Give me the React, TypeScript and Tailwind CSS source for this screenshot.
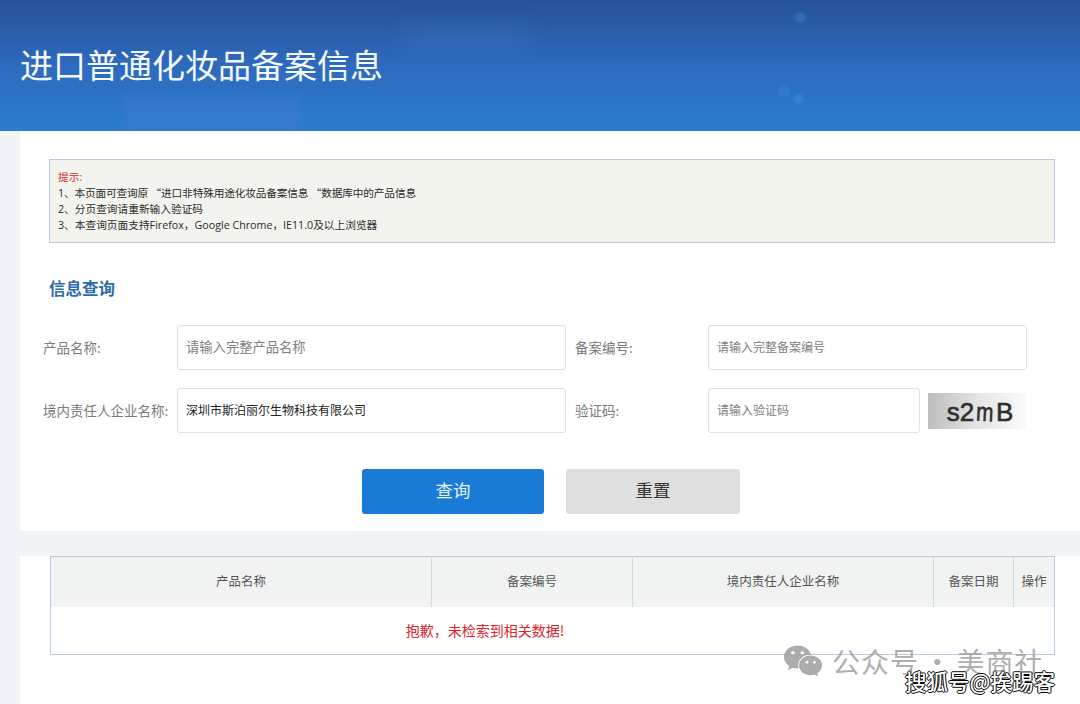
import { FaWeixin } from "react-icons/fa";

const labelClass = "text-[13.5px] text-[#7a7a7a]";
const inputClass = "h-[45px] rounded-[3px] border border-[#e0e0e0] bg-white px-2 pb-[2px] text-[12px] text-[#222] outline-none placeholder:text-[#808080]";
const quoteClass = "font-['Noto_Sans_CJK_SC',sans-serif]";

export default function App() {
    return (
        <div className="relative h-[704px] w-[1080px] overflow-hidden bg-[#f0f4f8] font-['Noto_Sans_CJK_SC',sans-serif]">
            <header className="relative flex h-[131px] items-center overflow-hidden bg-gradient-to-b from-[#27529b] via-[#2e6abd] to-[#2a7dcf] pb-[2px] pl-5">
                <div className="absolute bottom-0 left-[125px] h-[36px] w-[175px] bg-[#3f7bcf]/50 blur-[4px]" />
                <div className="absolute left-[400px] top-[25px] h-[30px] w-[130px] rounded-full bg-[#4a80c4]/20 blur-[10px]" />
                <div className="absolute left-[795px] top-[12px] size-[11px] rounded-full bg-[#3a80c8]/50 blur-[1px]" />
                <div className="absolute left-[778px] top-[85px] size-[12px] rounded-full bg-[#3a86d4]/50 blur-[1px]" />
                <div className="absolute left-[794px] top-[94px] size-[10px] rounded-full bg-[#3a8cd8]/60 blur-[1px]" />
                <h1 className="relative text-[33px] leading-none text-[#f2f8fc]">进口普通化妆品备案信息</h1>
            </header>

            <div className="flex flex-col pl-5">
                <section className="flex h-[400px] flex-col bg-white pt-7">
                    <div className="ml-[29px] mr-[25px] h-[84px] border border-[#b9cbe2] bg-[#f3f4ee] px-2 py-[9px] font-['Open_Sans','Noto_Sans_CJK_SC',sans-serif] text-[10.7px] leading-[16px] text-[#2b2b2b]">
                        <p className="text-[#d9262e]">提示:</p>
                        <p className="tracking-[-0.18px]">1、本页面可查询原 <span className={quoteClass}>“</span>进口非特殊用途化妆品备案信息 <span className={quoteClass}>“</span>数据库中的产品信息</p>
                        <p>2、分页查询请重新输入验证码</p>
                        <p>3、本查询页面支持Firefox，Google Chrome，IE11.0及以上浏览器</p>
                    </div>

                    <h2 className="ml-[29px] mt-[33px] text-[16.5px] font-bold leading-[24px] text-[#2e6ca8]">信息查询</h2>

                    <div className="mt-[25px] flex h-[45px] items-center pl-[23px]">
                        <div className={`w-[134px] ${labelClass}`}>产品名称:</div>
                        <input readOnly placeholder="请输入完整产品名称" className={`w-[389px] ${inputClass} text-[13.3px]`} />
                        <div className={`ml-[9px] w-[133px] ${labelClass}`}>备案编号:</div>
                        <input readOnly placeholder="请输入完整备案编号" className={`w-[319px] ${inputClass}`} />
                    </div>

                    <div className="mt-[18px] flex h-[45px] items-center pl-[23px]">
                        <div className={`w-[134px] whitespace-nowrap ${labelClass}`}>境内责任人企业名称:</div>
                        <input readOnly value="深圳市斯泊丽尔生物科技有限公司" className={`w-[389px] ${inputClass}`} />
                        <div className={`ml-[9px] w-[133px] ${labelClass}`}>验证码:</div>
                        <input readOnly placeholder="请输入验证码" className={`w-[212px] ${inputClass}`} />
                        <div className="ml-2 flex h-[36px] w-[98px] items-center justify-center bg-gradient-to-r from-[#bdbdbd] via-[#e4e4e4] to-[#fafafa] pl-[6px] pt-[2px] font-['Liberation_Sans',sans-serif] text-[26px] leading-none text-[#2e2e2e] [-webkit-text-stroke:0.6px_#2e2e2e]">
                            s2<span className="inline-block scale-x-[0.8] rotate-3">m</span>B
                        </div>
                    </div>

                    <div className="mt-9 flex gap-[22px] pl-[342px]">
                        <button className="h-[45px] w-[182px] rounded-[3px] bg-[#1a7bd7] pb-[2px] text-[17.5px] text-[#e6f3fc]">查询</button>
                        <button className="h-[45px] w-[174px] rounded-[3px] bg-[#dfdfdf] pb-[2px] text-[17.5px] text-[#333]">重置</button>
                    </div>
                </section>

                <div className="h-[25px] bg-[#f0f4f6]" />

                <section className="h-[148px] bg-white pl-[30px]">
                    <table className="w-[1005px] table-fixed border border-[#b9cbe2] text-[12.5px] text-[#555]">
                        <thead>
                            <tr className="h-[50px] bg-[#f1f2f2]">
                                <th className="w-[381px] border-r border-[#d5d8da] font-normal">产品名称</th>
                                <th className="w-[201px] border-r border-[#d5d8da] font-normal">备案编号</th>
                                <th className="w-[301px] border-r border-[#d5d8da] font-normal">境内责任人企业名称</th>
                                <th className="w-[80px] border-r border-[#d5d8da] font-normal">备案日期</th>
                                <th className="font-normal">操作</th>
                            </tr>
                        </thead>
                        <tbody>
                            <tr className="h-[48px]">
                                <td colSpan={5} className="pr-[135px] text-center text-[14px] text-[#d9252e]">抱歉，未检索到相关数据!</td>
                            </tr>
                        </tbody>
                    </table>
                </section>
            </div>

            <div className="absolute left-[783px] top-[641px] flex items-center gap-[9px] text-[#a3a3a3]/90">
                <FaWeixin className="size-[40px]" />
                <span className="whitespace-nowrap text-[28px] leading-[38px] tracking-[1px] [word-spacing:-3px]">公众号 · 美商社</span>
            </div>
            <div className="absolute left-[905px] top-[667px] whitespace-nowrap text-[21.5px] font-medium leading-[28px] text-white [text-shadow:1px_0_0_#000,-1px_0_0_#000,0_1px_0_#000,0_-1px_0_#000]">
                搜狐号@挨踢客
            </div>
        </div>
    );
}
